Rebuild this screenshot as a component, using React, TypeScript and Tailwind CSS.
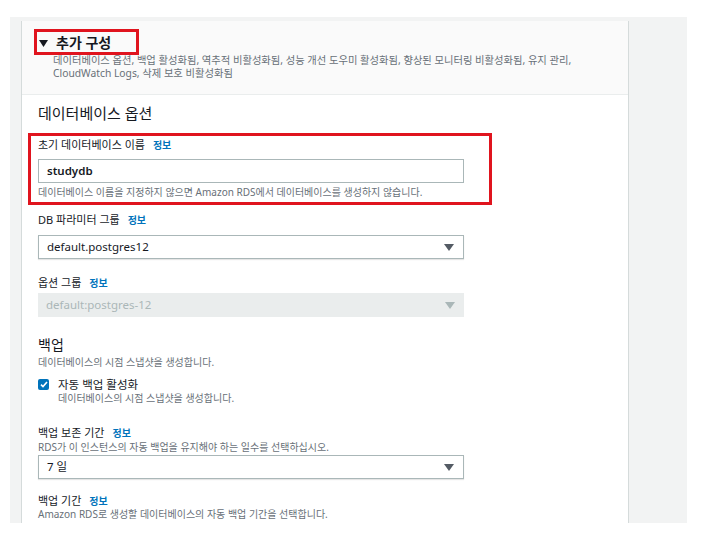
const font = { fontFamily: '"Noto Sans", "Noto Sans CJK KR", sans-serif' };

function Info() {
  return <span className="ml-2 text-[10px] font-bold text-[#0073bb]">정보</span>;
}

function Arrow({ disabled }: { disabled?: boolean }) {
  return (
    <svg width="10" height="7" viewBox="0 0 10 7" className="shrink-0">
      <path d="M0 0h10L5 7z" fill={disabled ? "#aab7b8" : "#545b64"} />
    </svg>
  );
}

function Select({ value, disabled }: { value: string; disabled?: boolean }) {
  return (
    <div
      className={
        "flex h-[24px] w-[426px] items-center justify-between pl-[8px] pr-[9px] text-[11.5px] " +
        (disabled
          ? "bg-[#eaeded] text-[#aab7b8]"
          : "border border-[#aab7b8] bg-white text-[#16191f] shadow-[0_1px_1px_rgba(0,0,0,0.1)]")
      }
    >
      <span>{value}</span>
      <Arrow disabled={disabled} />
    </div>
  );
}

export default function App() {
  return (
    <div className="h-[556px] w-[719px] overflow-hidden bg-white pl-[10px] pt-[17px]" style={font}>
      <div className="h-[506px] w-[677px] overflow-hidden bg-[#f2f3f3] pl-[11px] pt-[4px]">
        <div className="w-[608px] border-r border-l border-[#d5dbdb] bg-white">
          <div className="h-[74px] border-b border-[#eaeded] bg-[#fafafa] pl-[12px] pt-[8px]">
            <div className="flex h-[26px] w-[105px] items-center border-[3px] border-[#e0141e] pl-[2px]">
              <svg width="9" height="7" viewBox="0 0 9 7" className="mr-[8px] mt-[2px]">
                <path d="M0 0h9L4.5 7z" fill="#16191f" />
              </svg>
              <span className="text-[14px] font-bold text-[#16191f]">추가 구성</span>
            </div>
            <p className="ml-[19px] mt-[-1px] text-[10.3px] leading-[13px] text-[#687078]">
              데이터베이스 옵션, 백업 활성화됨, 역추적 비활성화됨, 성능 개선 도우미 활성화됨, 향상된 모니터링 비활성화됨, 유지 관리,
              <br />
              CloudWatch Logs, 삭제 보호 비활성화됨
            </p>
          </div>

          <div className="pl-[16px]">
            <h3 className="mt-[8px] text-[15px] leading-[20px] text-[#16191f]">데이터베이스 옵션</h3>

            <div className="relative mt-[15px]">
              <div className="absolute left-[-10px] top-[-5px] h-[72px] w-[464px] border-[3px] border-[#e0141e]" />
              <div className="flex items-center text-[11px] leading-[14px] text-[#16191f]">
                초기 데이터베이스 이름
                <Info />
              </div>
              <div className="mt-[7px] flex h-[24px] w-[426px] items-center border border-[#aab7b8] bg-white pl-[8px] text-[11.5px] font-semibold text-[#16191f]">
                studydb
              </div>
              <p className="mt-[2px] text-[10px] leading-[14px] text-[#687078]">
                데이터베이스 이름을 지정하지 않으면 Amazon RDS에서 데이터베이스를 생성하지 않습니다.
              </p>
            </div>

            <div className="mt-[14px] flex items-center text-[11px] leading-[14px] text-[#16191f]">
              DB 파라미터 그룹
              <Info />
            </div>
            <div className="mt-[8px]">
              <Select value="default.postgres12" />
            </div>

            <div className="mt-[17px] flex items-center text-[11px] leading-[14px] text-[#16191f]">
              옵션 그룹
              <Info />
            </div>
            <div className="mt-[3px]">
              <Select value="default:postgres-12" disabled />
            </div>

            <h3 className="mt-[19px] text-[14px] leading-[18px] text-[#16191f]">백업</h3>
            <p className="mt-[2px] text-[10px] leading-[13px] text-[#687078]">데이터베이스의 시점 스냅샷을 생성합니다.</p>

            <div className="mt-[8px] flex">
              <div className="mt-[2px] flex h-[11px] w-[11px] items-center justify-center rounded-[2px] bg-[#0073bb]">
                <svg width="8" height="7" viewBox="0 0 8 7">
                  <path d="M1 3.6l2 2L7 1" stroke="white" strokeWidth="1.6" fill="none" />
                </svg>
              </div>
              <div className="ml-[9px]">
                <div className="text-[11.5px] leading-[15px] text-[#16191f]">자동 백업 활성화</div>
                <div className="text-[10px] leading-[13px] text-[#687078]">데이터베이스의 시점 스냅샷을 생성합니다.</div>
              </div>
            </div>

            <div className="mt-[21px] flex items-center text-[11px] leading-[14px] text-[#16191f]">
              백업 보존 기간
              <Info />
            </div>
            <p className="mt-[1px] text-[10px] leading-[13px] text-[#687078]">
              RDS가 이 인스턴스의 자동 백업을 유지해야 하는 일수를 선택하십시오.
            </p>
            <div className="mt-[1px]">
              <Select value="7 일" />
            </div>

            <div className="mt-[15px] flex items-center text-[11px] leading-[14px] text-[#16191f]">
              백업 기간
              <Info />
            </div>
            <p className="mt-[0px] text-[10px] leading-[13px] text-[#687078]">
              Amazon RDS로 생성할 데이터베이스의 자동 백업 기간을 선택합니다.
            </p>
            <div className="h-[20px]" />
          </div>
        </div>
      </div>
    </div>
  );
}
